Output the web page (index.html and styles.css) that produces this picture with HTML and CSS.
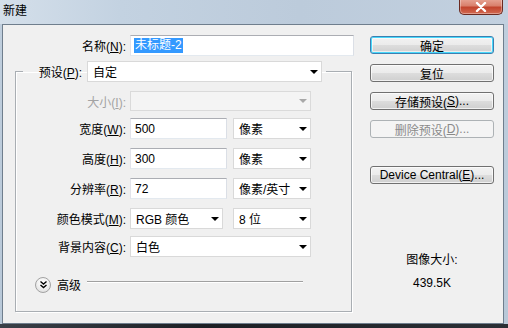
FILE: index.html
```html
<!DOCTYPE html>
<html>
<head>
<meta charset="utf-8">
<link rel="stylesheet" href="styles.css">
</head>
<body>
<div class="titlebar">
  <span class="title">新建</span>
  <div class="close"><svg width="14" height="10" viewBox="0 0 14 10"><path d="M3 1 L11 9 M11 1 L3 9" stroke="#fff" stroke-width="2.4" stroke-linecap="round"/></svg></div>
</div>
<div class="client">
  <div class="left">
    <div class="name-row">
      <span class="lbl lbl-name">名称(<u>N</u>):</span>
      <div class="textbox name"><span class="sel">未标题-2</span></div>
    </div>
    <fieldset class="group">
      <legend class="legend">
        <span class="lbl lbl-legend">预设(<u>P</u>):</span>
        <div class="combo preset"><span class="val">自定</span><i class="arrow"></i></div>
      </legend>
      <div class="row r-size">
        <span class="lbl dis">大小(<u>I</u>):</span>
        <div class="combo full disabled"><span class="val"></span><i class="arrow"></i></div>
      </div>
      <div class="row r-w">
        <span class="lbl">宽度(<u>W</u>):</span>
        <div class="textbox num"><span>500</span></div>
        <div class="combo unit"><span class="val">像素</span><i class="arrow"></i></div>
      </div>
      <div class="row r-h">
        <span class="lbl">高度(<u>H</u>):</span>
        <div class="textbox num"><span>300</span></div>
        <div class="combo unit"><span class="val">像素</span><i class="arrow"></i></div>
      </div>
      <div class="row r-r">
        <span class="lbl">分辨率(<u>R</u>):</span>
        <div class="textbox num"><span>72</span></div>
        <div class="combo unit"><span class="val">像素/英寸</span><i class="arrow"></i></div>
      </div>
      <div class="row r-m">
        <span class="lbl">颜色模式(<u>M</u>):</span>
        <div class="combo mode"><span class="val">RGB 颜色</span><i class="arrow"></i></div>
        <div class="combo unit"><span class="val">8 位</span><i class="arrow"></i></div>
      </div>
      <div class="row r-c">
        <span class="lbl">背景内容(<u>C</u>):</span>
        <div class="combo full"><span class="val">白色</span><i class="arrow"></i></div>
      </div>
      <div class="adv">
        <span class="circle"><svg width="9" height="9" viewBox="0 0 9 9"><path d="M1.5 1.5 L4.5 4 L7.5 1.5 M1.5 5 L4.5 7.5 L7.5 5" fill="none" stroke="#000" stroke-width="1.4"/></svg></span>
        <span class="adv-text">高级</span>
        <span class="adv-line"></span>
      </div>
    </fieldset>
  </div>
  <div class="right">
    <div class="btn default">确定</div>
    <div class="btn">复位</div>
    <div class="btn">存储预设(<u>S</u>)...</div>
    <div class="btn disabled">删除预设(<u>D</u>)...</div>
    <div class="btn dc">Device Central(<u>E</u>)...</div>
    <div class="info-label">图像大小:</div>
    <div class="info-value">439.5K</div>
  </div>
</div>
<div class="bottom"></div>
</body>
</html>
```
FILE: styles.css
```css
* { box-sizing: border-box; }
html, body { margin: 0; padding: 0; }
body {
  width: 508px;
  height: 328px;
  overflow: hidden;
  font-family: "Liberation Sans", "Noto Sans CJK SC", sans-serif;
  font-size: 12px;
  color: #000;
  background: linear-gradient(to bottom, #c9d7e5 0px, #bfcedd 24px, #b8c8d8 100%);
}
u { text-decoration: underline; text-underline-offset: 1px; }

.titlebar {
  height: 24px;
  position: relative;
  padding: 4px 0 0 3px;
  line-height: 14px;
  background: linear-gradient(to right, #d4dfea 0px, #c3d2e1 120px, #bccbdb 300px, #c2d0df 508px);
}
.title { font-size: 12px; color: #000; }
.close {
  position: absolute;
  left: 459px;
  top: -1px;
  width: 44px;
  height: 16px;
  border: 1px solid #6b2a20;
  border-top: none;
  border-radius: 0 0 5px 5px;
  background: linear-gradient(to bottom, #e7a595 0%, #d9806c 45%, #c2442d 55%, #d26a52 100%);
  box-shadow: inset 0 0 0 1px rgba(255,255,255,0.35);
  display: flex;
  align-items: center;
  justify-content: center;
}

.client {
  margin-left: 2px;
  width: 502px;
  height: 300px;
  border: 1px solid #6f7e8d;
  background: #f0f0f0;
  display: flex;
}
.bottom {
  height: 5px;
  background: linear-gradient(to right, #3a4048, #1c1f24 40%, #2b2f35 100%);
}

.left { width: 351px; flex: none; }

.lbl {
  display: inline-block;
  text-align: right;
  white-space: nowrap;
  flex: none;
}
.lbl.dis { color: #a3a3a3; }

.name-row {
  margin-top: 10px;
  display: flex;
  align-items: center;
  height: 21px;
}
.lbl-name { width: 123px; margin-right: 4px; }

.textbox {
  height: 21px;
  background: #fff;
  border: 1px solid;
  border-color: #abadb3 #dbdfe6 #e3e9ef #e2e3ea;
  display: flex;
  align-items: center;
  padding-left: 3px;
  flex: none;
  white-space: nowrap;
}
.textbox.name { width: 224px; }
.textbox.num { width: 97px; padding-left: 4px; }
.sel { background: #3399ff; color: #fff; padding: 0 1px; line-height: 15px; }

.group {
  margin: 5px 0 0 12px;
  padding: 0;
  width: 337px;
  height: 251px;
  border: 1px solid #a9aeb3;
  box-shadow: 1px 1px 0 #fff, inset 1px 1px 0 #fff;
  min-inline-size: 0;
}
.legend {
  margin-left: 7px;
  padding: 0 4px 0 0;
  display: flex;
  align-items: center;
}
.lbl-legend { width: 59px; margin-right: 5px; }

.combo {
  height: 21px;
  background: #fff;
  border: 1px solid #d9d9d9;
  display: flex;
  align-items: center;
  flex: none;
  white-space: nowrap;
}
.combo .val { flex: 1; padding-left: 5px; }
.arrow {
  width: 0; height: 0;
  border-left: 4px solid transparent;
  border-right: 4px solid transparent;
  border-top: 4px solid #000;
  margin-right: 3px;
}
.combo.disabled { background: #f4f4f4; border-color: #dadada; height: 20px; }
.combo.disabled .arrow { border-top-color: #a8a8a8; }
.combo.preset { width: 235px; }
.combo.full { width: 181px; }
.combo.unit { width: 78px; margin-left: 6px; }
.combo.mode { width: 93px; }
.combo.mode + .combo.unit { margin-left: 10px; }

.row {
  display: flex;
  align-items: center;
}
.row .lbl { width: 110px; margin-right: 4px; }
.r-size { margin-top: 9px; }
.r-w { margin-top: 7px; }
.r-h, .r-r, .r-m { margin-top: 9px; }
.r-c { margin-top: 7px; }

.adv {
  margin-top: 19px;
  margin-left: 19px;
  display: flex;
  align-items: center;
  height: 17px;
}
.circle {
  width: 16px;
  height: 16px;
  border-radius: 50%;
  border: 1px solid #a2a2a2;
  background: radial-gradient(circle at 50% 35%, #ffffff 0%, #f2f2f2 45%, #d6d6d6 100%);
  display: flex;
  align-items: center;
  justify-content: center;
  flex: none;
}
.adv-text { margin-left: 6px; }
.adv-line {
  margin-left: 6px;
  width: 216px;
  height: 2px;
  border-top: 1px solid #a0a0a0;
  border-bottom: 1px solid #fff;
  margin-top: -5px;
}

.right {
  margin-left: 16px;
  width: 124px;
  padding-top: 11px;
  display: flex;
  flex-direction: column;
  align-items: stretch;
}
.btn {
  height: 18px;
  margin-bottom: 10px;
  border: 1px solid #707070;
  border-radius: 3px;
  background: linear-gradient(to bottom, #f2f2f2 0%, #ebebeb 50%, #dddddd 51%, #cfcfcf 100%);
  box-shadow: inset 0 0 0 1px rgba(255,255,255,0.7);
  display: flex;
  align-items: center;
  justify-content: center;
  white-space: nowrap;
}
.btn.default {
  border-color: #3c7fb1;
  box-shadow: inset 0 0 0 1px #48d8fb, inset 0 0 0 2px rgba(255,255,255,0.6);
}
.btn.disabled {
  border-color: #adb2b5;
  background: #f4f4f4;
  box-shadow: none;
  color: #8a8a8a;
}
.btn.dc { margin-top: 18px; }
.info-label {
  margin-top: 58px;
  line-height: 16px;
  text-align: center;
}
.info-value {
  margin-top: 7px;
  line-height: 16px;
  text-align: center;
}
```
